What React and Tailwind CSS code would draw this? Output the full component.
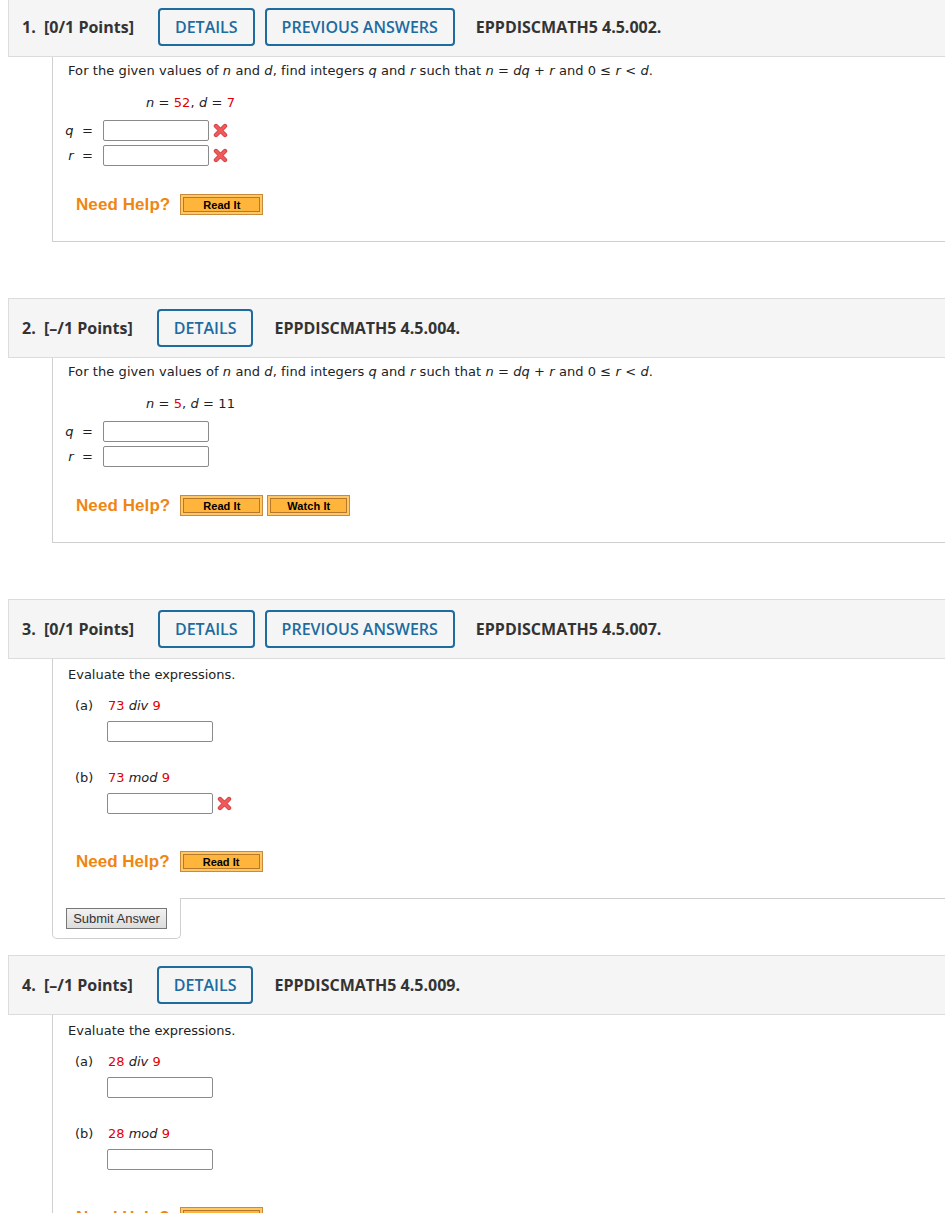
import React from 'react';

const body = "font-['DejaVu_Sans',Verdana,sans-serif] text-[13px] text-[#222]";

function XMark() {
  return (
    <svg width="15" height="15" viewBox="0 0 15 15" className="ml-[4px] shrink-0">
      <path d="M3 3 L12 12 M12 3 L3 12" stroke="#c93a3a" strokeWidth="4.4" strokeLinecap="round" />
      <path d="M3 3 L12 12 M12 3 L3 12" stroke="#f2595b" strokeWidth="3" strokeLinecap="round" />
    </svg>
  );
}

function Box({ wrong }) {
  return (
    <div className="flex items-center">
      <div className="h-[21px] w-[106px] rounded-[2px] border border-[#8a8a8a] bg-white" />
      {wrong && <XMark />}
    </div>
  );
}

function HeadBtn({ children }) {
  return (
    <div className="flex h-[38px] items-center rounded-[4px] border-2 border-[#1d6b9f] px-[15px] text-[16px] font-semibold text-[#1d6b9f]">
      {children}
    </div>
  );
}

function Header({ num, pts, prev, code }) {
  return (
    <div className="ml-2 flex h-[60px] items-center gap-[10px] border border-r-0 border-[#dcdcdc] bg-[#f5f5f5] pl-[13px] font-['Open_Sans',sans-serif] text-[#333]">
      <span className="mr-[14px] whitespace-nowrap text-[16px] font-bold">
        {num}.&nbsp;&nbsp;[{pts} Points]
      </span>
      <HeadBtn>DETAILS</HeadBtn>
      {prev && <HeadBtn>PREVIOUS ANSWERS</HeadBtn>}
      <span className="ml-[11px] text-[16px] font-bold">{code}</span>
    </div>
  );
}

function OrangeBtn({ children }) {
  return (
    <div className="border border-[#c98a3c] bg-[#ffc866] p-[2px]">
      <div className="flex h-[15px] w-[77px] items-center justify-center border border-[#b87729] bg-[#ffb43c] font-['Liberation_Sans',Arial,sans-serif] text-[11px] font-bold text-black">
        {children}
      </div>
    </div>
  );
}

function Help({ watch }) {
  return (
    <div className="flex items-center gap-[10px] pl-[8px]">
      <span className="font-['Liberation_Sans',Arial,sans-serif] text-[17px] font-bold text-[#ef8612]">Need Help?</span>
      <div className="flex gap-[4px]">
        <OrangeBtn>Read It</OrangeBtn>
        {watch && <OrangeBtn>Watch It</OrangeBtn>}
      </div>
    </div>
  );
}

const red = 'text-[#e00000]';

function DivMod({ n, d, wrong }) {
  return (
    <>
      <p className="pt-[7px] leading-[18px]">Evaluate the expressions.</p>
      <div className="mt-[13px] pl-[7px]">
        <div className="flex leading-[18px]">
          <span className="w-[33px]">(a)</span>
          <span>
            <span className={red}>{n}</span> <i>div</i> <span className={red}>{d}</span>
          </span>
        </div>
        <div className="mt-[6px] pl-[32px]">
          <Box wrong={wrong[0]} />
        </div>
        <div className="mt-[27px] flex leading-[18px]">
          <span className="w-[33px]">(b)</span>
          <span>
            <span className={red}>{n}</span> <i>mod</i> <span className={red}>{d}</span>
          </span>
        </div>
        <div className="mt-[6px] pl-[32px]">
          <Box wrong={wrong[1]} />
        </div>
      </div>
    </>
  );
}

function Label({ v }) {
  return (
    <span className="flex w-[25px] shrink-0 justify-end whitespace-nowrap">
      <i>{v}</i>&nbsp;&nbsp;=
    </span>
  );
}

function QR({ n, d, wrong, watch }) {
  return (
    <div className={`ml-[52px] h-[185px] border-b border-l border-[#cfcfcf] pl-[15px] tracking-[0.08px] ${body}`}>
      <p className="pt-[5px] leading-[18px]">
        For the given values of <i>n</i> and <i>d</i>, find integers <i>q</i> and <i>r</i> such that <i>n</i> = <i>dq</i> + <i>r</i> and 0 ≤ <i>r</i> &lt; <i>d</i>.
      </p>
      <p className="mt-[14px] pl-[78px] leading-[18px]">
        <i>n</i> = <span className={red}>{n}</span>, <i>d</i> = <span className={d === '11' ? '' : red}>{d}</span>
      </p>
      <div className="mt-[8px] flex flex-col gap-[4px]">
        <div className="flex items-center">
          <Label v="q" />
          <span className="w-[10px]" />
          <Box wrong={wrong} />
        </div>
        <div className="flex items-center">
          <Label v="r" />
          <span className="w-[10px]" />
          <Box wrong={wrong} />
        </div>
      </div>
      <div className="mt-[26px]">
        <Help watch={watch} />
      </div>
    </div>
  );
}

export default function App() {
  return (
    <div className="w-[945px] overflow-hidden bg-white pb-10">
      <div className="mt-[-3px]">
        <Header num="1" pts="0/1" prev code="EPPDISCMATH5 4.5.002." />
        <QR n="52" d="7" wrong />
      </div>

      <div className="mt-[56px]">
        <Header num="2" pts="–/1" code="EPPDISCMATH5 4.5.004." />
        <QR n="5" d="11" watch />
      </div>

      <div className="mt-[56px]">
        <Header num="3" pts="0/1" prev code="EPPDISCMATH5 4.5.007." />
        <div className="ml-[52px]">
          <div className={`h-[239px] border-l border-[#cfcfcf] pl-[15px] ${body}`}>
            <DivMod n="73" d="9" wrong={[false, true]} />
            <div className="mt-[35px]">
              <Help />
            </div>
          </div>
          <div className="flex">
            <div className="h-[41px] w-[129px] rounded-b-[5px] border-b border-l border-r border-[#cfcfcf] pl-[13px] pt-[10px]">
              <div className="flex h-[21px] w-[101px] items-center justify-center border border-[#777] bg-gradient-to-b from-[#f2f2f2] to-[#dcdcdc] font-['Liberation_Sans',Arial,sans-serif] text-[13px] text-[#333]">
                Submit Answer
              </div>
            </div>
            <div className="flex-1 border-t border-[#cfcfcf]" />
          </div>
        </div>
      </div>

      <div className="mt-[16px]">
        <Header num="4" pts="–/1" code="EPPDISCMATH5 4.5.009." />
        <div className={`ml-[52px] h-[260px] border-l border-[#cfcfcf] pl-[15px] ${body}`}>
          <DivMod n="28" d="9" wrong={[false, false]} />
          <div className="mt-[35px]">
            <Help />
          </div>
        </div>
      </div>
    </div>
  );
}
